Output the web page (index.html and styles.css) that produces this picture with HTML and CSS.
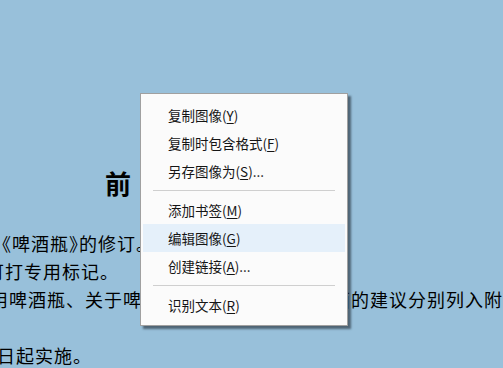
FILE: index.html
```html
<!DOCTYPE html>
<html lang="zh-CN">
<head>
<meta charset="utf-8">
<title>前言</title>
<link rel="stylesheet" href="styles.css">
</head>
<body>
<div class="doc">
  <h1 class="title">前　言</h1>
  <p class="line l1">《啤酒瓶<span class="half">》</span>的修订。</p>
  <p class="line l2">可打专用标记。</p>
  <p class="line l3">用啤酒瓶、关于啤酒瓶标志和回收利用方面的建议分别列入附录A和附录B。</p>
  <p class="line blank">&nbsp;</p>
  <p class="line l4">日起实施。</p>
</div>

<div class="menu">
  <div class="item">复制图像(<u>Y</u>)</div>
  <div class="item">复制时包含格式(<u>F</u>)</div>
  <div class="item">另存图像为(<u>S</u>)...</div>
  <div class="sep"></div>
  <div class="item">添加书签(<u>M</u>)</div>
  <div class="item active">编辑图像(<u>G</u>)</div>
  <div class="item">创建链接(<u>A</u>)...</div>
  <div class="sep"></div>
  <div class="item">识别文本(<u>R</u>)</div>
</div>
</body>
</html>
```

FILE: styles.css
```css
html, body {
  margin: 0;
  padding: 0;
  overflow: hidden;
}

body {
  width: 503px;
  height: 368px;
  background: #98c0da;
  font-family: "Noto Sans CJK SC", "Noto Sans", sans-serif;
  position: relative;
}

.doc {
  padding-top: 168px;
  color: #000;
}

.title {
  margin: 0 0 31px 105px;
  font-size: 26px;
  line-height: 30px;
  font-weight: 700;
  white-space: nowrap;
}

.line {
  margin: 0;
  font-size: 18px;
  letter-spacing: 1px;
  line-height: 28px;
  white-space: nowrap;
}

.half {
  font-feature-settings: "halt";
}

.l1 { text-indent: -7px; }
.l2 { text-indent: -14px; }
.l3 { text-indent: -10px; }
.l4 { text-indent: -3px; }

.menu {
  position: absolute;
  left: 140px;
  top: 93px;
  width: 208px;
  box-sizing: border-box;
  background: #fbfbfb;
  border: 1px solid #a0a0a0;
  box-shadow: 3px 3px 2px rgba(30, 40, 50, 0.6);
  padding: 7px 2px 6px;
  font-size: 13.5px;
  color: #151515;
}

.item {
  height: 28px;
  line-height: 28px;
  padding-left: 25px;
  white-space: nowrap;
}

.item u {
  text-decoration: underline;
  text-underline-offset: 2px;
}

.item.active {
  background: #e5f0fa;
}

.sep {
  height: 1px;
  background: #cfcfcf;
  margin: 5px 10px 5px 10px;
}
```
